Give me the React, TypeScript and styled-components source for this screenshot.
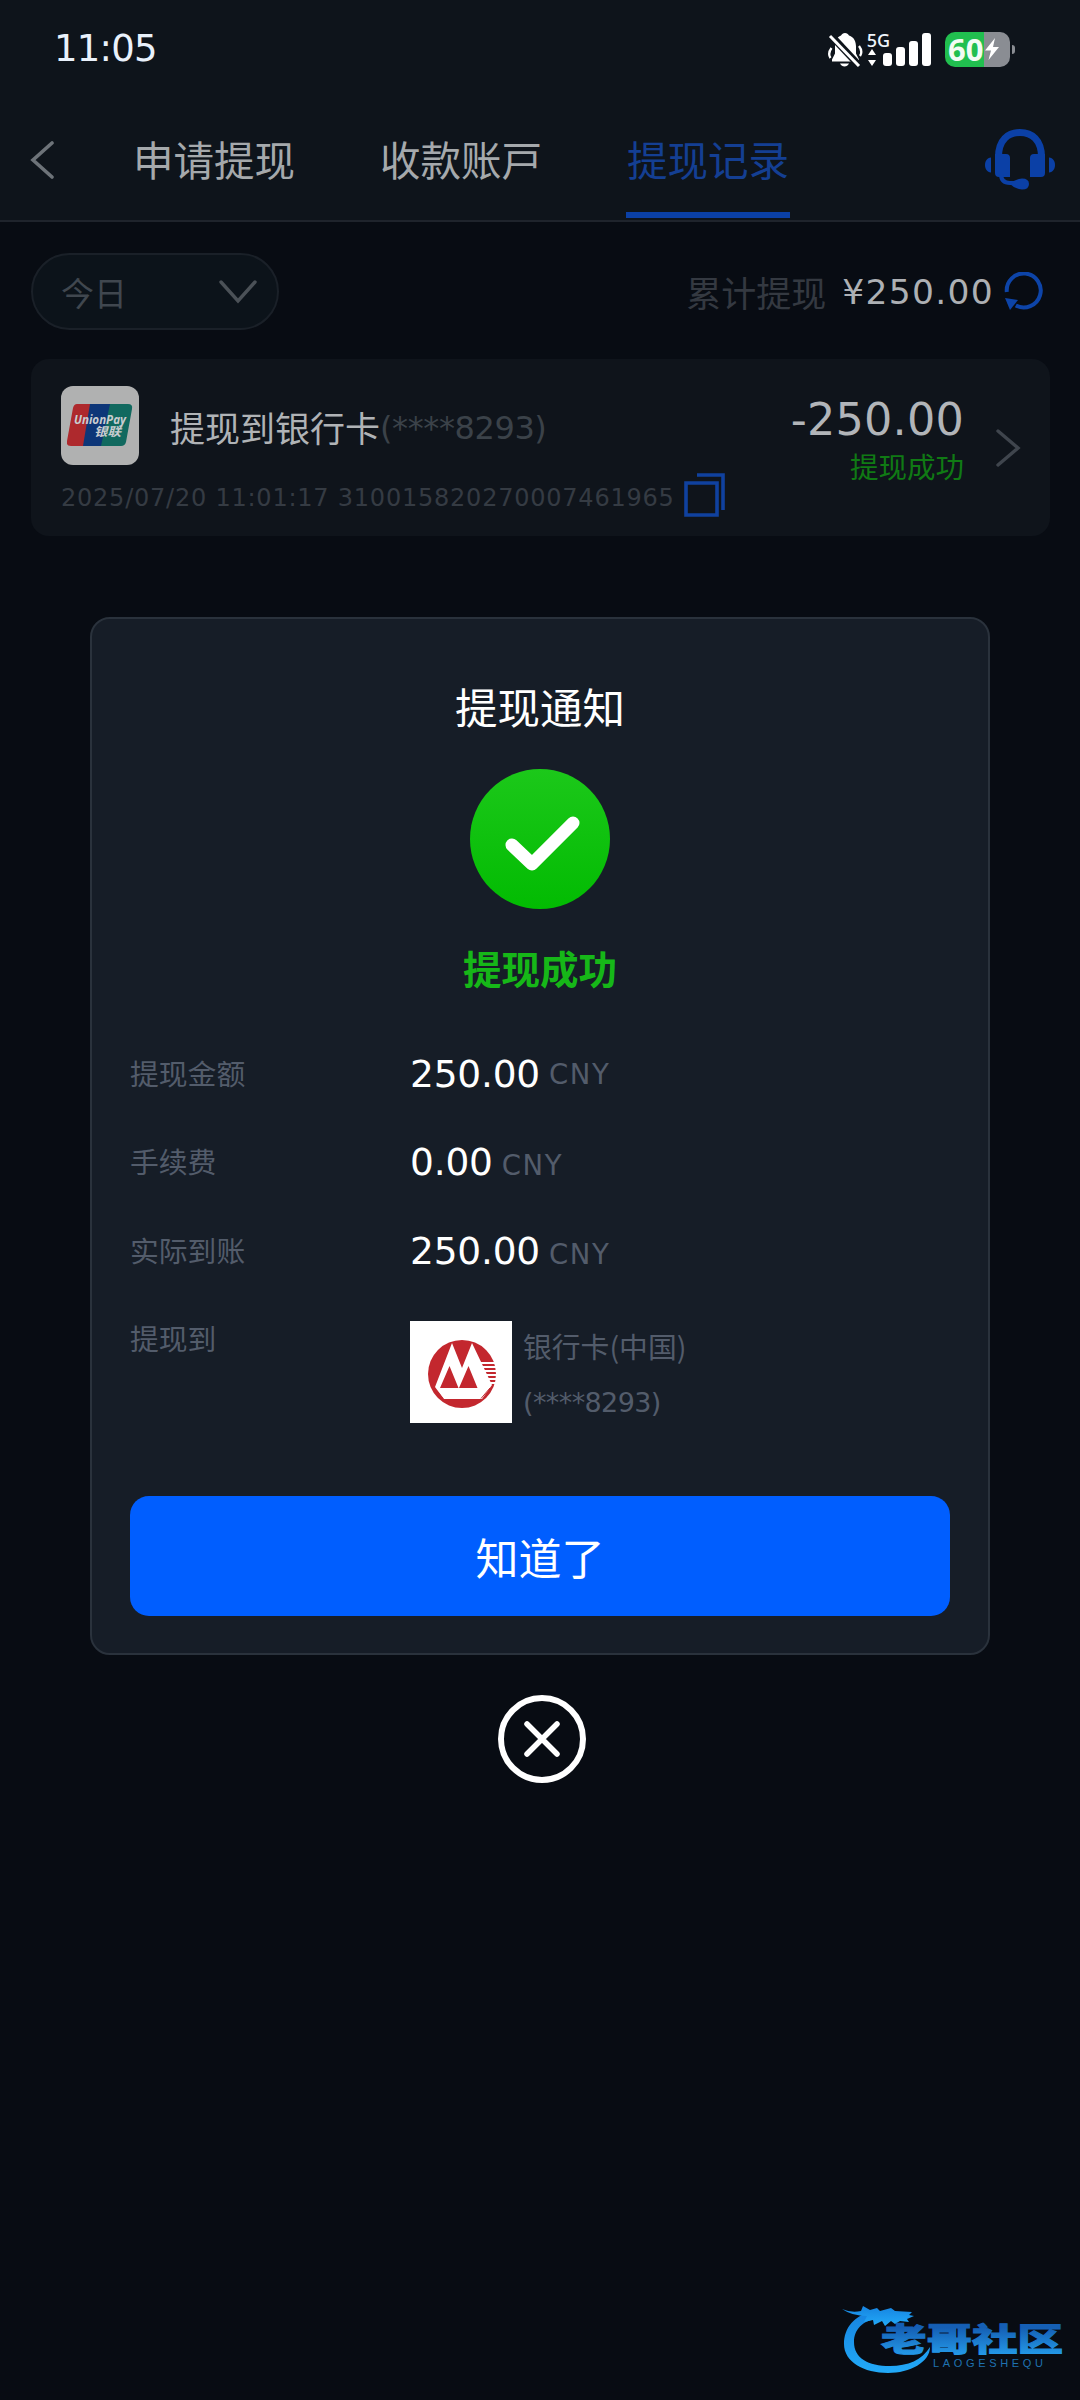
import React from 'react';
import styled, { createGlobalStyle } from 'styled-components';

const Global = createGlobalStyle`
  *, *::before, *::after { box-sizing: border-box; }
  body { margin: 0; background: #080c13; }
  button { border: 0; padding: 0; background: none; font: inherit; color: inherit; }
  svg { display: block; flex: none; }
`;

const CJK = '"Noto Sans CJK SC"';

const Page = styled.div`
  position: relative;
  width: 1080px;
  height: 2400px;
  overflow: hidden;
  background: #080c13;
  font-family: "DejaVu Sans", ${CJK}, sans-serif;
`;

const Header = styled.header`
  height: 222px;
  background: #0e141b;
  border-bottom: 2px solid #1f242c;
`;

const StatusBar = styled.div`
  display: flex;
  justify-content: space-between;
  align-items: center;
  height: 98px;
  padding: 0 70px 0 54px;
`;

const Clock = styled.time`
  font-size: 37px;
  line-height: 40px;
  letter-spacing: -0.8px;
  color: #e9f1fb;
`;

const StatusIcons = styled.div`
  display: flex;
  align-items: center;
`;

const Network = styled.div`
  display: flex;
  align-items: flex-end;
  height: 34px;
  margin-left: 4px;
`;

const Generation = styled.div`
  display: flex;
  flex-direction: column;
  width: 16px;
  height: 34px;
  font: 500 18px/17px "Noto Sans", sans-serif;
  color: #eef4fb;
`;

const Bar = styled.i<{ $h: number }>`
  width: 9.5px;
  height: ${(p) => p.$h}px;
  margin-right: 3.6px;
  border-radius: 3px;
  background: #fff;
`;

const Battery = styled.div`
  position: relative;
  display: flex;
  align-items: center;
  gap: 1px;
  width: 65px;
  height: 35px;
  margin-left: 10px;
  padding-left: 3px;
  border-radius: 10px;
  background: linear-gradient(90deg, #21bf4f 39px, #8a8d93 39px);
  font: 700 31px/35px "Noto Sans", sans-serif;
  color: #f2fbf4;

  &::after {
    content: '';
    position: absolute;
    left: 67px;
    top: 13px;
    width: 3px;
    height: 9px;
    border-radius: 0 3px 3px 0;
    background: #8a8d93;
  }
`;

const Nav = styled.nav`
  display: flex;
  align-items: stretch;
  height: 122px;
  padding: 0 25px 0 30px;
`;

const NavButton = styled.button<{ $top: number }>`
  align-self: flex-start;
  margin-top: ${(p) => p.$top}px;
`;

const Tabs = styled.div`
  display: flex;
  gap: 83px;
  flex: 1;
  margin-left: 78px;
`;

const Tab = styled.button<{ $active?: boolean }>`
  width: 164px;
  height: 120px;
  padding: 16px 0 8px;
  border-bottom: 6px solid ${(p) => (p.$active ? '#0b40a6' : 'transparent')};
  font: 400 40.5px/50px ${CJK}, sans-serif;
  white-space: nowrap;
  color: ${(p) => (p.$active ? '#143f93' : '#a5a9ac')};
`;

const Content = styled.main`
  padding: 31px 30px 0 31px;
`;

const FilterRow = styled.div`
  display: flex;
  justify-content: space-between;
  align-items: center;
  height: 77px;
`;

const DateFilter = styled.button`
  display: flex;
  justify-content: space-between;
  align-items: center;
  width: 248px;
  height: 77px;
  padding: 0 20px 0 28px;
  border: 2px solid #1a2028;
  border-radius: 39px;
  background: #0c131a;
  font: 400 33px/40px ${CJK}, sans-serif;
  color: #40474f;
`;

const Summary = styled.div`
  display: flex;
  align-items: center;
  padding-right: 6px;
`;

const SummaryLabel = styled.span`
  font: 400 35px/44px ${CJK}, sans-serif;
  color: #343941;
`;

const SummaryValue = styled.span`
  margin: 0 10px 0 16px;
  font-size: 34.5px;
  line-height: 44px;
  letter-spacing: 1.3px;
  color: #adb0b4;
`;

const RecordCard = styled.section`
  display: flex;
  align-items: center;
  width: 1019px;
  height: 177px;
  margin-top: 29px;
  padding: 0 29px 0 30px;
  border-radius: 18px;
  background: #0f141b;
`;

const RecordMain = styled.div`
  flex: 1;
  height: 177px;
  padding-top: 26px;
`;

const RecordTitle = styled.div`
  display: flex;
  align-items: center;
  height: 80px;
`;

const UnionTile = styled.div`
  display: flex;
  align-items: center;
  justify-content: center;
  width: 78px;
  height: 79px;
  margin-right: 31px;
  border-radius: 12px;
  background: #b0b1b1;
`;

const RecordName = styled.span`
  font: 400 35px/44px ${CJK}, sans-serif;
  padding-top: 3px;
  color: #b0b3b6;
`;

const RecordCardNo = styled.span`
  padding-top: 6px;
  font-size: 32px;
  line-height: 44px;
  letter-spacing: -0.4px;
  color: #3b4249;
`;

const RecordMeta = styled.div`
  display: flex;
  align-items: center;
  gap: 9px;
  height: 50px;
  margin-top: 5px;
  font-size: 24px;
  letter-spacing: 0.77px;
  white-space: pre;
  color: #353b43;
`;

const RecordNumber = styled.span`
  padding-top: 6px;
`;

const RecordAmount = styled.div`
  display: flex;
  flex-direction: column;
  align-items: flex-end;
  margin-right: 31px;
`;

const Amount = styled.strong`
  font-weight: 400;
  font-size: 44.5px;
  line-height: 52px;
  letter-spacing: 0.2px;
  color: #b2b5b9;
`;

const AmountStatus = styled.span`
  font: 400 28.5px/40px ${CJK}, sans-serif;
  margin-bottom: 16px;
  color: #107a14;
`;

const Overlay = styled.div`
  position: absolute;
  inset: 0;
  display: flex;
  flex-direction: column;
  align-items: center;
  padding-top: 617px;
`;

const Dialog = styled.section`
  display: flex;
  flex-direction: column;
  align-items: center;
  width: 900px;
  height: 1038px;
  padding: 57px 38px 0;
  border: 2px solid #2a323c;
  border-radius: 20px;
  background: #161d27;
`;

const DialogTitle = styled.h2`
  margin: 0;
  font: 400 42.5px/60px ${CJK}, sans-serif;
  color: #fff;
`;

const CheckCircle = styled.div`
  width: 140px;
  height: 140px;
  margin-top: 33px;
  border-radius: 50%;
  background: linear-gradient(#1cc81a, #02bb02);
`;

const DialogStatus = styled.p`
  margin: 33px 0 0;
  font: 700 38.5px/50px ${CJK}, sans-serif;
  color: #16b718;
`;

const Details = styled.dl`
  width: 820px;
  margin: 52px 0 0;
`;

const Detail = styled.div`
  display: grid;
  grid-template-columns: 280px 1fr;
  height: 88.3px;
  align-items: start;
`;

const Term = styled.dt`
  font: 400 28.8px/60px ${CJK}, sans-serif;
  margin-top: -1px;
  color: #535c6b;
`;

const Value = styled.dd<{ $align: string }>`
  display: flex;
  align-items: ${(p) => p.$align};
  gap: 9px;
  margin: 0;
  font-size: 37.5px;
  line-height: 60px;
  letter-spacing: -0.2px;
  color: #fff;
`;

const Currency = styled.span`
  font-size: 27.5px;
  letter-spacing: 1.6px;
  color: #535c6b;
`;

const Destination = styled.dd`
  display: flex;
  gap: 11px;
  margin: 12px 0 0;
`;

const BankTile = styled.div`
  width: 102px;
  height: 102px;
  background: #fff;
`;

const BankText = styled.div`
  font: 400 28.8px/50px ${CJK}, sans-serif;
  color: #535c6b;
`;

const BankNumber = styled.div`
  margin-top: 7px;
  font: 400 27px/50px "DejaVu Sans", sans-serif;
  letter-spacing: -0.6px;
`;

const Confirm = styled.button`
  width: 820px;
  height: 120px;
  margin-top: 99px;
  border-radius: 19px;
  background: #005eff;
  font: 400 43px/120px ${CJK}, sans-serif;
  color: #fff;
`;

const Close = styled.button`
  margin: 40px 0 0 4px;
`;

const Watermark = styled.div`
  position: absolute;
  right: 12px;
  bottom: 24px;
`;

function BellOff() {
  return (
    <svg width="36" height="35" viewBox="0 0 36 35">
      <path d="M18 1c2 0 3 1 4 2.500c5 1.500 7 6 7 11v7l3 6v2H5v-2l3-6v-7C8 9 10 5 14 3.500C15 2 16 1 18 1z" fill="#fff" />
      <path d="M13 31.500h9c-1 2-2.600 3-4.500 3s-3.500-1-4.500-3z" fill="#fff" />
      <path d="M4.500 16c-3 4-3 7-1 10M32 14c3 4 3 7 1 10" stroke="#fff" strokeWidth="2.300" fill="none" />
      <path d="M4 3.500 33 34.500" stroke="#0e141b" strokeWidth="7" />
      <path d="M3 4 32 34" stroke="#fff" strokeWidth="3" />
    </svg>
  );
}

function Headset() {
  return (
    <svg width="70" height="61" viewBox="0 0 70 61">
      <path d="M13.500 28C13.500 11 23 3.500 35 3.500S56.500 11 56.500 28" fill="none" stroke="#0b40a6" strokeWidth="7" />
      <path d="M10 25h11q4 0 4 4v19H14q-4 0-4-4zM60 25H49q-4 0-4 4v19h11q4 0 4-4z" fill="#0b40a6" />
      <path d="M6 28.500v15C2 43 0 40 0 36s2-7 6-7.500zM64 28.500v15c4-.5 6-3.500 6-7.500s-2-7-6-7.500z" fill="#0b40a6" />
      <path d="M16 45q0 9 9 9h6" fill="none" stroke="#0b40a6" strokeWidth="4" />
      <path d="M25 55q5-5 12-5.500q7 0 7 5.500t-7 5.500Q30 60 25 55z" fill="#0b40a6" />
    </svg>
  );
}

function UnionPay() {
  return (
    <svg width="66" height="42" viewBox="0 0 66 42">
      <path d="M10 0h17l-8 42H4q-5 0-4-5L6 4q1-4 4-4z" fill="#ae292d" />
      <path d="M23 0h22l-8 42H16z" fill="#0d3678" />
      <path d="M43 0h18q5 0 4 5l-6 33q-1 4-5 4H34z" fill="#11695f" />
      <g fill="#c9cdd0" fontWeight="700" fontStyle="italic">
        <text x="7" y="20" fontSize="12.500" textLength="52" lengthAdjust="spacingAndGlyphs" fontFamily="Open Sans, sans-serif">UnionPay</text>
        <text x="27" y="32" fontSize="12" textLength="27" lengthAdjust="spacingAndGlyphs" fontFamily="Noto Sans CJK SC, sans-serif">银联</text>
      </g>
    </svg>
  );
}

function MerchantsBank() {
  return (
    <svg width="102" height="102" viewBox="0 0 102 102">
      <circle cx="52" cy="53" r="34" fill="#c3272e" />
      <path d="M42 22 25 66l9 12h38l10-14L62 22 52 47z" fill="#fff" />
      <path d="M39.500 45 30 67h18.500zM58.500 45 49 67h18.500z" fill="#c3272e" />
      <path d="M70 42h17M71 46h16M72 50h15M73 54h15M75 58h12M76 62h10" stroke="#fff" strokeWidth="2" />
      <path d="M26 69l7 8.500M80 67l-9 10.500" stroke="#c3272e" strokeWidth="1" />
    </svg>
  );
}

function CommunityLogo() {
  return (
    <svg width="226" height="76" viewBox="0 0 226 76">
      <defs>
        <linearGradient id="ring" x1="0" y1="0" x2="0" y2="1">
          <stop offset="0" stopColor="#1683e0" />
          <stop offset="1" stopColor="#22aaf8" />
        </linearGradient>
        <linearGradient id="word" x1="0" y1="0" x2="0" y2="1">
          <stop offset="0.300" stopColor="#155fb4" />
          <stop offset="1" stopColor="#27a5f2" />
        </linearGradient>
      </defs>
      <path d="M32 11C12 15 2 28 2 44C2 62 22 73 46 73C68 73 88 62 88 47C80 60 66 66 48 66C26 66 12 58 12 42C12 30 20 20 38 18z" fill="url(#ring)" />
      <path d="M0 9q9 4 19 2l2-5 7 4 7-2 3 3 11-3 4 3 17 1-3 3 5 1-7 3 2 3-9-1-5 3-4-3-6 5-3-5-8 4-1-5-9 2 3-6Q10 16 0 9z" fill="url(#ring)" />
      <text x="39" y="51" fontSize="32" fontWeight="900" textLength="182" lengthAdjust="spacingAndGlyphs" fontFamily="Noto Sans CJK SC, sans-serif" fill="url(#word)" stroke="url(#word)" strokeWidth="1">老哥社区</text>
      <text x="91" y="67" fontSize="11" textLength="110" fontFamily="Liberation Sans, sans-serif" fill="#1f72b0">LAOGESHEQU</text>
    </svg>
  );
}

const amounts = [
  { label: '提现金额', value: '250.00', align: 'center' },
  { label: '手续费', value: '0.00', align: 'baseline' },
  { label: '实际到账', value: '250.00', align: 'baseline' },
];

export default function App() {
  return (
    <Page>
      <Global />
      <Header>
        <StatusBar>
          <Clock>11:05</Clock>
          <StatusIcons>
            <BellOff />
            <Network>
              <Generation>
                5G
                <svg width="10" height="17" viewBox="0 0 10 17">
                  <path d="M5 0l4 6H1zM5 17l4-6H1z" fill="#fff" />
                </svg>
              </Generation>
              {[13, 19, 25, 33].map((h) => <Bar key={h} $h={h} />)}
            </Network>
            <Battery>
              60
              <svg width="16" height="22" viewBox="0 0 16 22">
                <path d="M11 0 1 12.500h6L4.500 22 15 9H9z" fill="#fff" />
              </svg>
            </Battery>
          </StatusIcons>
        </StatusBar>
        <Nav>
          <NavButton $top={43} aria-label="返回">
            <svg width="24" height="38" viewBox="0 0 24 38">
              <path d="M22 2 3 19l19 17" fill="none" stroke="#6d7379" strokeWidth="3.600" strokeLinecap="round" />
            </svg>
          </NavButton>
          <Tabs>
            <Tab>申请提现</Tab>
            <Tab>收款账戸</Tab>
            <Tab $active>提现记录</Tab>
          </Tabs>
          <NavButton $top={31} aria-label="客服"><Headset /></NavButton>
        </Nav>
      </Header>

      <Content>
        <FilterRow>
          <DateFilter>
            今日
            <svg width="38" height="24" viewBox="0 0 38 24">
              <path d="M2 2l17 19L36 2" fill="none" stroke="#4b5157" strokeWidth="3.400" strokeLinecap="round" />
            </svg>
          </DateFilter>
          <Summary>
            <SummaryLabel>累计提现</SummaryLabel>
            <SummaryValue>¥250.00</SummaryValue>
            <svg width="40" height="40" viewBox="0 0 40 40">
              <path d="M2.800 20a17 17 0 1 1 9 13.500" fill="none" stroke="#0d44a8" strokeWidth="4" />
              <path d="M1 26l13 2-8 10z" fill="#0d44a8" />
            </svg>
          </Summary>
        </FilterRow>

        <RecordCard>
          <RecordMain>
            <RecordTitle>
              <UnionTile><UnionPay /></UnionTile>
              <RecordName>提现到银行卡</RecordName>
              <RecordCardNo>(****8293)</RecordCardNo>
            </RecordTitle>
            <RecordMeta>
              <RecordNumber>2025/07/20 11:01:17 310015820270007461965</RecordNumber>
              <svg width="42" height="44" viewBox="0 0 42 44">
                <path d="M2 10h31v32H2zM13 2h26v35" fill="none" stroke="#10419f" strokeWidth="3.600" />
              </svg>
            </RecordMeta>
          </RecordMain>
          <RecordAmount>
            <Amount>-250.00</Amount>
            <AmountStatus>提现成功</AmountStatus>
          </RecordAmount>
          <svg width="26" height="40" viewBox="0 0 26 40">
            <path d="M3 3l20 17L3 37" fill="none" stroke="#3f454d" strokeWidth="3.400" strokeLinecap="round" />
          </svg>
        </RecordCard>
      </Content>

      <Overlay>
        <Dialog>
          <DialogTitle>提现通知</DialogTitle>
          <CheckCircle>
            <svg width="140" height="140" viewBox="0 0 140 140">
              <path d="M42 76l20 19 41-41" fill="none" stroke="#fff" strokeWidth="13" strokeLinecap="round" strokeLinejoin="round" />
            </svg>
          </CheckCircle>
          <DialogStatus>提现成功</DialogStatus>
          <Details>
            {amounts.map((row) => (
              <Detail key={row.label}>
                <Term>{row.label}</Term>
                <Value $align={row.align}>
                  {row.value}
                  <Currency>CNY</Currency>
                </Value>
              </Detail>
            ))}
            <Detail>
              <Term>提现到</Term>
              <Destination>
                <BankTile><MerchantsBank /></BankTile>
                <BankText>
                  银行卡(中国)
                  <BankNumber>(****8293)</BankNumber>
                </BankText>
              </Destination>
            </Detail>
          </Details>
          <Confirm>知道了</Confirm>
        </Dialog>
        <Close aria-label="关闭">
          <svg width="88" height="88" viewBox="0 0 88 88">
            <circle cx="44" cy="44" r="41" fill="none" stroke="#fff" strokeWidth="6" />
            <path d="M29 29l30 30M59 29 29 59" stroke="#fff" strokeWidth="5.500" strokeLinecap="round" />
          </svg>
        </Close>
      </Overlay>

      <Watermark><CommunityLogo /></Watermark>
    </Page>
  );
}
